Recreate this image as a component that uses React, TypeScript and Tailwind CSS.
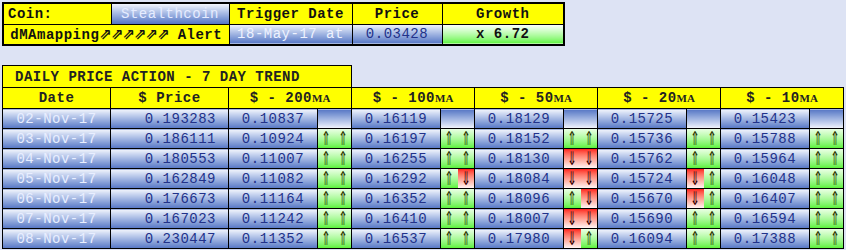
type Trend = 'u' | 'd'

type MaCell = {
  value: string
  trend?: [Trend, Trend]
}

type Row = {
  date: string
  price: string
  ma: MaCell[]
}

const rows: Row[] = [
  {
    date: '02-Nov-17',
    price: '0.193283',
    ma: [{ value: '0.10837' }, { value: '0.16119' }, { value: '0.18129' }, { value: '0.15725' }, { value: '0.15423' }],
  },
  {
    date: '03-Nov-17',
    price: '0.186111',
    ma: [
      { value: '0.10924', trend: ['u', 'u'] },
      { value: '0.16197', trend: ['u', 'u'] },
      { value: '0.18152', trend: ['u', 'u'] },
      { value: '0.15736', trend: ['u', 'u'] },
      { value: '0.15788', trend: ['u', 'u'] },
    ],
  },
  {
    date: '04-Nov-17',
    price: '0.180553',
    ma: [
      { value: '0.11007', trend: ['u', 'u'] },
      { value: '0.16255', trend: ['u', 'u'] },
      { value: '0.18130', trend: ['d', 'd'] },
      { value: '0.15762', trend: ['u', 'u'] },
      { value: '0.15964', trend: ['u', 'u'] },
    ],
  },
  {
    date: '05-Nov-17',
    price: '0.162849',
    ma: [
      { value: '0.11082', trend: ['u', 'u'] },
      { value: '0.16292', trend: ['u', 'd'] },
      { value: '0.18084', trend: ['d', 'd'] },
      { value: '0.15724', trend: ['d', 'u'] },
      { value: '0.16048', trend: ['u', 'u'] },
    ],
  },
  {
    date: '06-Nov-17',
    price: '0.176673',
    ma: [
      { value: '0.11164', trend: ['u', 'u'] },
      { value: '0.16352', trend: ['u', 'u'] },
      { value: '0.18096', trend: ['u', 'd'] },
      { value: '0.15670', trend: ['d', 'u'] },
      { value: '0.16407', trend: ['u', 'u'] },
    ],
  },
  {
    date: '07-Nov-17',
    price: '0.167023',
    ma: [
      { value: '0.11242', trend: ['u', 'u'] },
      { value: '0.16410', trend: ['u', 'u'] },
      { value: '0.18007', trend: ['d', 'd'] },
      { value: '0.15690', trend: ['u', 'u'] },
      { value: '0.16594', trend: ['u', 'u'] },
    ],
  },
  {
    date: '08-Nov-17',
    price: '0.230447',
    ma: [
      { value: '0.11352', trend: ['u', 'u'] },
      { value: '0.16537', trend: ['u', 'u'] },
      { value: '0.17980', trend: ['d', 'u'] },
      { value: '0.16094', trend: ['u', 'u'] },
      { value: '0.17388', trend: ['u', 'u'] },
    ],
  },
]

const maHeaders = ['200', '100', '50', '20', '10']

const blue = 'bg-gradient-to-b from-[#f2f5fc] to-[#5676c4]'
const blueFlip = 'bg-gradient-to-b from-[#5676c4] to-[#f4f6fc]'
const yellow = 'bg-[#ffff00]'
const cell = 'border border-black p-0'
const arrowFont = "font-['DejaVu_Sans',sans-serif] text-[19px] leading-none tracking-normal"

function Half({ trend }: { trend: Trend }) {
  if (trend === 'u') {
    return (
      <div className={`flex flex-1 items-center justify-center bg-gradient-to-b from-[#eaffe4] to-[#5cf23a] text-[#2e3a00] ${arrowFont}`}>
        <span className="inline-block scale-x-[0.6]">⇑</span>
      </div>
    )
  }
  return (
    <div className={`flex flex-1 items-center justify-center bg-gradient-to-b from-[#ff1a1a] to-[#fff4f4] text-[#3a0000] ${arrowFont}`}>
      <span className="inline-block scale-x-[0.6]">⇓</span>
    </div>
  )
}

function MaHeader({ n }: { n: string }) {
  return (
    <th colSpan={2} className={`${cell} ${yellow} font-bold text-[#222]`}>
      $ - {n}
      <span className="font-['Liberation_Serif',serif] text-[11px] tracking-normal">MA</span>
    </th>
  )
}

export default function App() {
  return (
    <div className="min-h-[250px] bg-[#dde3f4] p-[2px] font-['Liberation_Mono','DejaVu_Sans_Mono',monospace] text-[14px] leading-none tracking-[0.5px]">
      <table className="table-fixed border-collapse border-2 border-black">
        <colgroup>
          <col className="w-[108px]" />
          <col className="w-[118px]" />
          <col className="w-[123px]" />
          <col className="w-[90px]" />
          <col className="w-[122px]" />
        </colgroup>
        <tbody>
          <tr className="h-[21px]">
            <td className={`${cell} ${yellow} pl-1 font-bold text-[#111]`}>Coin:</td>
            <td className={`${cell} ${blue} text-center text-[#e6ecff]`}>Stealthcoin</td>
            <td className={`${cell} ${yellow} text-center font-bold text-[#111]`}>Trigger Date</td>
            <td className={`${cell} ${yellow} text-center font-bold text-[#111]`}>Price</td>
            <td className={`${cell} ${yellow} text-center font-bold text-[#111]`}>Growth</td>
          </tr>
          <tr className="h-[21px]">
            <td colSpan={2} className={`${cell} ${yellow} whitespace-nowrap text-center font-bold text-[#111]`}>
              dMAmapping
              <span className="font-['DejaVu_Sans',sans-serif] text-[15px] tracking-[-1px]">⇗⇗⇗⇗⇗⇗</span> Alert
            </td>
            <td className={`${cell} ${blue} text-center text-[#eef2ff]`}>18-May-17 at</td>
            <td className={`${cell} ${blue} text-center text-[#22328a]`}>0.03428</td>
            <td className={`${cell} bg-gradient-to-b from-[#ffffff] to-[#5ef43c] text-center font-bold text-[#111]`}>
              x 6.72
            </td>
          </tr>
        </tbody>
      </table>

      <table className="mt-[19px] table-fixed border-collapse">
        <colgroup>
          <col className="w-[108px]" />
          <col className="w-[118px]" />
          {maHeaders.map((n) => [
            <col key={`v${n}`} className="w-[89px]" />,
            <col key={`a${n}`} className="w-[34px]" />,
          ])}
        </colgroup>
        <tbody>
          <tr className="h-[22px]">
            <td colSpan={4} className={`${cell} ${yellow} pl-3 font-bold text-[#222]`}>
              DAILY PRICE ACTION - 7 DAY TREND
            </td>
            <td colSpan={8} className="border-0 p-0" />
          </tr>
          <tr className="h-[21px]">
            <th className={`${cell} ${yellow} font-bold text-[#222]`}>Date</th>
            <th className={`${cell} ${yellow} font-bold text-[#222]`}>$ Price</th>
            {maHeaders.map((n) => (
              <MaHeader key={n} n={n} />
            ))}
          </tr>
          {rows.map((row) => (
            <tr key={row.date} className="h-[20px]">
              <td className={`${cell} ${blue} text-center text-[#e8eeff]`}>{row.date}</td>
              <td className={`${cell} ${blue} pr-3 text-right text-[#22328a]`}>{row.price}</td>
              {row.ma.map((m, i) => [
                <td key={`v${i}`} className={`${cell} ${blue} text-center text-[#22328a]`}>
                  {m.value}
                </td>,
                <td key={`a${i}`} className={`${cell} ${m.trend ? '' : blueFlip}`}>
                  {m.trend && (
                    <div className="flex h-[19px]">
                      <Half trend={m.trend[0]} />
                      <Half trend={m.trend[1]} />
                    </div>
                  )}
                </td>,
              ])}
            </tr>
          ))}
        </tbody>
      </table>
    </div>
  )
}
